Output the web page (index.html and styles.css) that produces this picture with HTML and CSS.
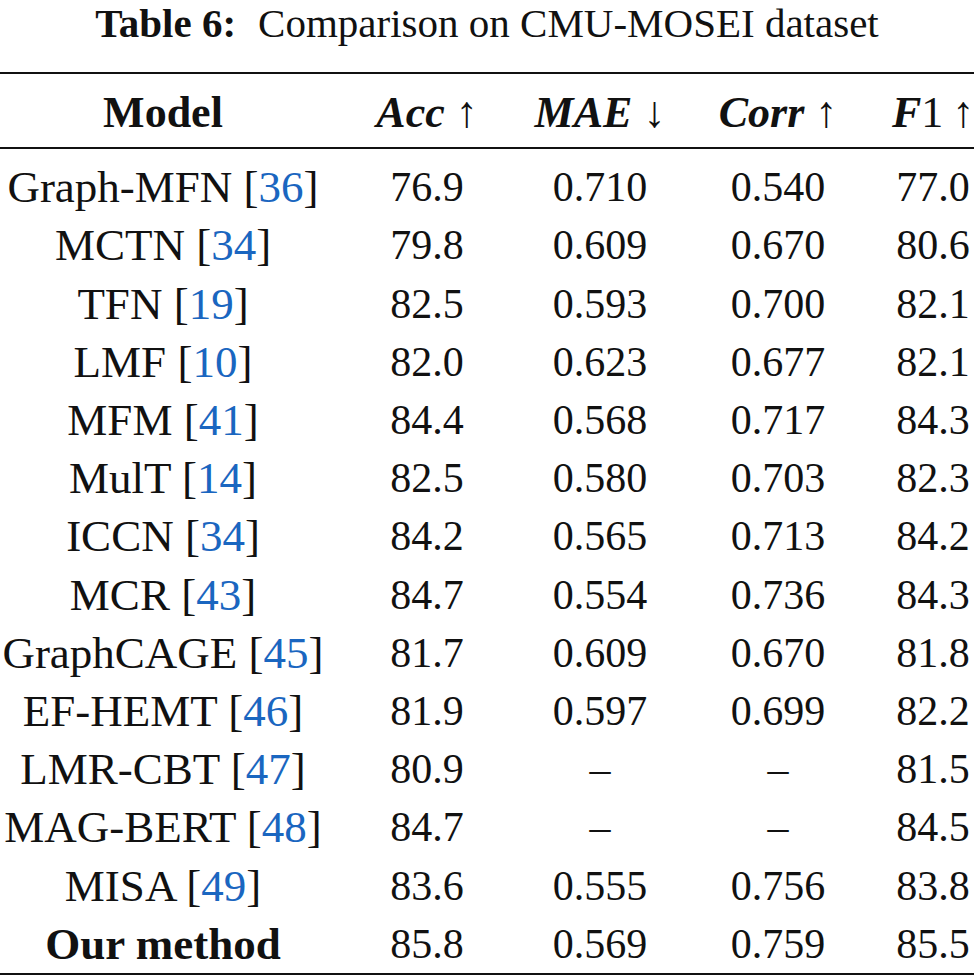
FILE: index.html
```html
<!DOCTYPE html>
<html>
<head>
<meta charset="utf-8">
<link rel="stylesheet" href="styles.css">
</head>
<body>
<div class="page">
  <div class="caption"><span class="cap-label">Table 6:</span>Comparison on CMU-MOSEI dataset</div>
  <table class="results">
    <colgroup>
      <col class="c-model"><col class="c-acc"><col class="c-mae"><col class="c-corr"><col class="c-f1">
    </colgroup>
    <thead>
      <tr>
        <th class="bold">Model</th>
        <th><i>Acc</i> ↑</th>
        <th><i>MAE</i> ↓</th>
        <th><i>Corr</i> ↑</th>
        <th class="last"><i>F</i>1&#8201;↑</th>
      </tr>
    </thead>
    <tbody>
      <tr><td class="name">Graph-MFN [<span class="ref">36</span>]</td><td>76.9</td><td>0.710</td><td>0.540</td><td class="last">77.0</td></tr>
      <tr><td class="name">MCTN [<span class="ref">34</span>]</td><td>79.8</td><td>0.609</td><td>0.670</td><td class="last">80.6</td></tr>
      <tr><td class="name">TFN [<span class="ref">19</span>]</td><td>82.5</td><td>0.593</td><td>0.700</td><td class="last">82.1</td></tr>
      <tr><td class="name">LMF [<span class="ref">10</span>]</td><td>82.0</td><td>0.623</td><td>0.677</td><td class="last">82.1</td></tr>
      <tr><td class="name">MFM [<span class="ref">41</span>]</td><td>84.4</td><td>0.568</td><td>0.717</td><td class="last">84.3</td></tr>
      <tr><td class="name">MulT [<span class="ref">14</span>]</td><td>82.5</td><td>0.580</td><td>0.703</td><td class="last">82.3</td></tr>
      <tr><td class="name">ICCN [<span class="ref">34</span>]</td><td>84.2</td><td>0.565</td><td>0.713</td><td class="last">84.2</td></tr>
      <tr><td class="name">MCR [<span class="ref">43</span>]</td><td>84.7</td><td>0.554</td><td>0.736</td><td class="last">84.3</td></tr>
      <tr><td class="name">GraphCAGE [<span class="ref">45</span>]</td><td>81.7</td><td>0.609</td><td>0.670</td><td class="last">81.8</td></tr>
      <tr><td class="name">EF-HEMT [<span class="ref">46</span>]</td><td>81.9</td><td>0.597</td><td>0.699</td><td class="last">82.2</td></tr>
      <tr><td class="name">LMR-CBT [<span class="ref">47</span>]</td><td>80.9</td><td>–</td><td>–</td><td class="last">81.5</td></tr>
      <tr><td class="name">MAG-BERT [<span class="ref">48</span>]</td><td>84.7</td><td>–</td><td>–</td><td class="last">84.5</td></tr>
      <tr><td class="name">MISA [<span class="ref">49</span>]</td><td>83.6</td><td>0.555</td><td>0.756</td><td class="last">83.8</td></tr>
      <tr><td class="name bold">Our method</td><td>85.8</td><td>0.569</td><td>0.759</td><td class="last">85.5</td></tr>
    </tbody>
  </table>
</div>
</body>
</html>
```

FILE: styles.css
```css
html, body {
  margin: 0;
  padding: 0;
  background: #ffffff;
}
body {
  width: 974px;
  height: 980px;
  overflow: hidden;
  font-family: "Liberation Serif", "Times New Roman", serif;
  color: #111111;
}
.page {
  width: 974px;
}
.caption {
  font-size: 41px;
  line-height: 46px;
  text-align: center;
  margin: 0 0 26px 0;
  white-space: nowrap;
}
.cap-label {
  font-weight: bold;
  margin-right: 22px;
}
.results {
  border-collapse: collapse;
  table-layout: fixed;
  width: 974px;
  font-size: 42px;
  line-height: 58.2px;
  border-top: 2.5px solid #111;
  border-bottom: 2.5px solid #111;
}
.c-model { width: 326px; }
.c-acc { width: 202px; }
.c-mae { width: 144px; }
.c-corr { width: 212px; }
.c-f1 { width: 90px; }
.results th,
.results td {
  padding: 0;
  text-align: center;
  white-space: nowrap;
  font-weight: normal;
}
.results thead th {
  font-size: 44px;
  padding-top: 10px;
  padding-bottom: 5px;
  border-bottom: 2px solid #111;
}
.results thead th i {
  font-weight: bold;
}
.results tbody td.name {
  font-size: 45px;
}
.results tbody tr:first-child td {
  padding-top: 9px;
}
.results th.last,
.results td.last {
  padding-left: 8px;
}
.results .bold {
  font-weight: bold;
}
.ref {
  color: #1a66c0;
}
```
